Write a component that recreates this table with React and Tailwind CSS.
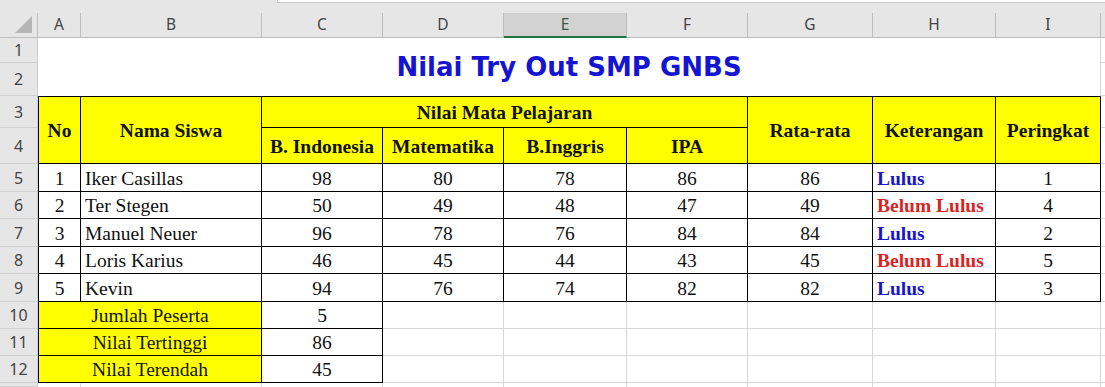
import React from "react";
import clsx from "clsx";

// explicit placement classes (written out so Tailwind picks them up)
const C = ["", "col-start-1", "col-start-2", "col-start-3", "col-start-4", "col-start-5", "col-start-6", "col-start-7", "col-start-8", "col-start-9", "col-start-10", "col-start-11"];
const R = ["", "row-start-1", "row-start-2", "row-start-3", "row-start-4", "row-start-5", "row-start-6", "row-start-7", "row-start-8", "row-start-9", "row-start-10", "row-start-11", "row-start-12", "row-start-13", "row-start-14", "row-start-15"];

const letters = ["A", "B", "C", "D", "E", "F", "G", "H", "I"];

const siswa = [
  { no: 1, nama: "Iker Casillas", nilai: [98, 80, 78, 86], rata: 86, ket: "Lulus", rank: 1 },
  { no: 2, nama: "Ter Stegen", nilai: [50, 49, 48, 47], rata: 49, ket: "Belum Lulus", rank: 4 },
  { no: 3, nama: "Manuel Neuer", nilai: [96, 78, 76, 84], rata: 84, ket: "Lulus", rank: 2 },
  { no: 4, nama: "Loris Karius", nilai: [46, 45, 44, 43], rata: 45, ket: "Belum Lulus", rank: 5 },
  { no: 5, nama: "Kevin", nilai: [94, 76, 74, 82], rata: 82, ket: "Lulus", rank: 3 },
];

const ringkasan = [
  ["Jumlah Peserta", 5],
  ["Nilai Tertinggi", 86],
  ["Nilai Terendah", 45],
];

// a plain spreadsheet cell with the light gridlines
const Blank = ({ c, r, className }) => (
  <div className={clsx(C[c], R[r], "border-r border-b border-[#d6d6d6] bg-white", className)} />
);

const Cell = ({ c, r, className, children }) => (
  <div className={clsx(C[c], R[r], "flex items-center border-r border-b border-black px-[4px] pt-[2px] whitespace-nowrap", className)}>
    {children}
  </div>
);

export default function App() {
  return (
    <div className="h-[387px] w-[1105px] overflow-hidden bg-white font-['Liberation_Serif',serif] text-[19.5px] text-[#111]">
      <div className="grid h-full grid-cols-[38px_43px_181px_121px_121px_123px_121px_125px_123px_105px_1fr] grid-rows-[13px_25px_25px_33px_32px_36px_28px_27px_28px_27px_28px_27px_27px_27px_1fr]">
        {/* strip above the column headers */}
        <div className="col-span-full row-start-1 flex bg-[#e6e6e6]">
          <div className="w-[277px]" />
          <div className="h-[3px] flex-1 border-b border-l border-[#c6c6c6] bg-white" />
        </div>

        {/* corner */}
        <div className="col-start-1 row-start-2 flex items-end justify-end border-r border-b border-[#bcbcbc] bg-[#e6e6e6] pr-[5px] pb-[4px]">
          <svg width="17" height="17" viewBox="0 0 17 17">
            <polygon points="17,0 17,17 0,17" fill="#b5b5b5" />
          </svg>
        </div>

        {/* column headers */}
        {letters.map((l, i) => (
          <div
            key={l}
            className={clsx(
              C[i + 2],
              "row-start-2 flex items-center justify-center border-r font-['Noto_Sans',sans-serif] text-[15.5px]",
              l === "E"
                ? "border-b-2 border-r-[#bcbcbc] border-b-[#217346] bg-[#d2d2d2] text-[#3c5a48]"
                : "border-b border-[#bcbcbc] bg-[#e6e6e6] text-[#444]"
            )}
          >
            {l}
          </div>
        ))}
        <div className="col-start-11 row-start-2 border-b border-[#bcbcbc] bg-[#e6e6e6]" />

        {/* row numbers */}
        {Array.from({ length: 13 }, (_, i) => (
          <div
            key={i}
            className={clsx(
              C[1],
              R[i + 3],
              "flex items-center justify-center border-r border-b border-[#cfcfcf] bg-[#e6e6e6] font-['Noto_Sans',sans-serif] text-[16px] leading-none text-[#444]"
            )}
          >
            {i < 12 ? i + 1 : ""}
          </div>
        ))}

        {/* title */}
        <div className="col-start-2 col-span-9 row-start-3 row-span-2 flex items-center justify-center border-r border-[#d6d6d6] font-['DejaVu_Sans',sans-serif] text-[26px] font-bold text-[#1414d2]">
          Nilai Try Out SMP GNBS
        </div>
        <Blank c={11} r={3} className="border-r-0" />
        <Blank c={11} r={4} className="border-r-0" />

        {/* table head */}
        <Cell c={2} r={5} className="row-span-2 justify-center border-t border-l bg-[#ffff00] font-bold">No</Cell>
        <Cell c={3} r={5} className="row-span-2 justify-center border-t bg-[#ffff00] font-bold">Nama Siswa</Cell>
        <Cell c={4} r={5} className="col-span-4 justify-center border-t bg-[#ffff00] font-bold">Nilai Mata Pelajaran</Cell>
        <Cell c={8} r={5} className="row-span-2 justify-center border-t bg-[#ffff00] font-bold">Rata-rata</Cell>
        <Cell c={9} r={5} className="row-span-2 justify-center border-t bg-[#ffff00] font-bold">Keterangan</Cell>
        <Cell c={10} r={5} className="row-span-2 justify-center border-t bg-[#ffff00] font-bold">Peringkat</Cell>
        {["B. Indonesia", "Matematika", "B.Inggris", "IPA"].map((m, i) => (
          <Cell key={m} c={i + 4} r={6} className="justify-center bg-[#ffff00] font-bold">{m}</Cell>
        ))}
        <Blank c={11} r={5} className="border-r-0" />
        <Blank c={11} r={6} className="border-r-0" />

        {/* students */}
        {siswa.map((s, i) => {
          const r = i + 7;
          return (
            <React.Fragment key={s.no}>
              <Cell c={2} r={r} className="justify-center border-l">{s.no}</Cell>
              <Cell c={3} r={r}>{s.nama}</Cell>
              {s.nilai.map((n, j) => (
                <Cell key={j} c={j + 4} r={r} className="justify-center">{n}</Cell>
              ))}
              <Cell c={8} r={r} className="justify-center">{s.rata}</Cell>
              <Cell c={9} r={r} className={clsx("font-bold", s.ket === "Lulus" ? "text-[#1717c8]" : "text-[#d92424]")}>
                {s.ket}
              </Cell>
              <Cell c={10} r={r} className="justify-center">{s.rank}</Cell>
              <Blank c={11} r={r} className="border-r-0" />
            </React.Fragment>
          );
        })}

        {/* summary */}
        {ringkasan.map(([label, val], i) => {
          const r = i + 12;
          return (
            <React.Fragment key={label}>
              <Cell c={2} r={r} className="col-span-2 justify-center border-l bg-[#ffff00]">{label}</Cell>
              <Cell c={4} r={r} className="justify-center">{val}</Cell>
              {[5, 6, 7, 8, 9, 10].map((c) => (
                <Blank key={c} c={c} r={r} />
              ))}
              <Blank c={11} r={r} className="border-r-0" />
            </React.Fragment>
          );
        })}

        {/* row 13, cut off */}
        {[2, 3, 4, 5, 6, 7, 8, 9, 10].map((c) => (
          <div key={c} className={clsx(C[c], "row-start-15 border-r border-[#d6d6d6]")} />
        ))}
      </div>
    </div>
  );
}
